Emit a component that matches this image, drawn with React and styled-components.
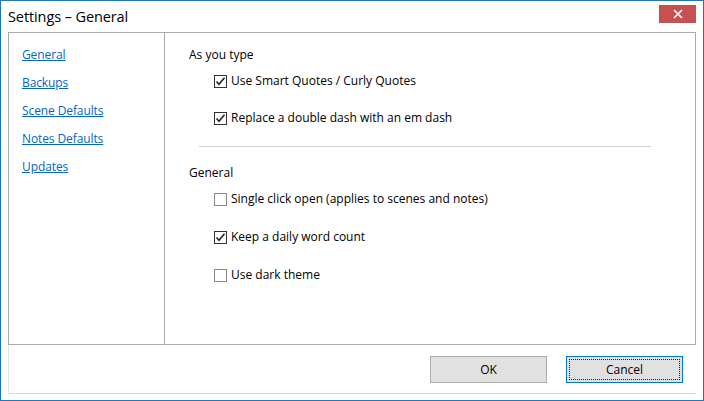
import React from "react";
import styled, { createGlobalStyle } from "styled-components";

const GlobalStyle = createGlobalStyle`
  html, body {
    margin: 0;
    padding: 0;
    background: #ffffff;
  }
  body {
    font-family: "Open Sans", "Noto Sans", sans-serif;
  }
`;

const Window = styled.div`
  box-sizing: border-box;
  width: 704px;
  height: 401px;
  border: 1px solid #1c79c6;
  background: #ffffff;
  display: flex;
  flex-direction: column;
`;

const TitleBar = styled.div`
  height: 31px;
  display: flex;
  align-items: center;
  justify-content: space-between;
  padding: 0 7px 0 7px;
  flex-shrink: 0;
`;

const Title = styled.div`
  font-size: 14.5px;
  color: #000;
  letter-spacing: -0.1px;
  margin-top: -1px;
`;

const CloseButton = styled.div`
  width: 37px;
  height: 18px;
  background: #c75050;
  display: flex;
  align-items: center;
  justify-content: center;
  margin-top: -6px;
`;

const Body = styled.div`
  flex: 1;
  display: flex;
  flex-direction: column;
  padding: 0 7px 6px 7px;
`;

const Panels = styled.div`
  height: 313px;
  display: flex;
  border: 1px solid #a9a9a9;
  box-sizing: border-box;
`;

const Nav = styled.div`
  width: 156px;
  border-right: 1px solid #a9a9a9;
  padding: 13px 0 0 13px;
  box-sizing: border-box;
  display: flex;
  flex-direction: column;
  gap: 10px;
`;

const NavLink = styled.a`
  font-size: 12px;
  line-height: 18px;
  color: #0066cc;
  text-decoration: underline;
  cursor: pointer;
  letter-spacing: -0.1px;
`;

const Content = styled.div`
  flex: 1;
  padding: 13px 0 0 24px;
  display: flex;
  flex-direction: column;
`;

const SectionTitle = styled.div`
  font-size: 12px;
  line-height: 18px;
  color: #000;
`;

const OptionList = styled.div`
  display: flex;
  flex-direction: column;
  gap: ${(p) => p.$gap}px;
  padding: ${(p) => p.$top}px 0 0 25px;
`;

const Option = styled.label`
  display: flex;
  align-items: center;
  gap: 4px;
  font-size: 12px;
  line-height: 18px;
  color: #000;
`;

const Box = styled.span`
  width: 13px;
  height: 13px;
  box-sizing: border-box;
  border: 1px solid ${(p) => (p.$checked ? "#333" : "#8a8a8a")};
  background: #fff;
  display: flex;
  align-items: center;
  justify-content: center;
`;

const Divider = styled.div`
  width: 452px;
  height: 1px;
  background: #d0d0d0;
  margin: 19px 0 17px 10px;
`;

const Footer = styled.div`
  flex: 1;
  display: flex;
  align-items: center;
  justify-content: flex-end;
  gap: 19px;
  padding-right: 13px;
  border-left: 1px solid #e3e3e3;
  border-bottom: 1px solid #d8d8d8;
`;

const Button = styled.button`
  width: 117px;
  height: 27px;
  box-sizing: border-box;
  background: #e1e1e1;
  border: 1px solid ${(p) => (p.$focused ? "#0078d7" : "#adadad")};
  font-family: "Open Sans", "Noto Sans", sans-serif;
  font-size: 12px;
  color: #000;
  padding: 0;
  position: relative;
  &::after {
    content: "";
    display: ${(p) => (p.$focused ? "block" : "none")};
    position: absolute;
    inset: 2px;
    border: 1px dotted #222;
  }
`;

const Check = () => (
  <svg width="11" height="11" viewBox="0 0 11 11">
    <path d="M1.5 5.5 L4 8.2 L9.5 1.8" fill="none" stroke="#222" strokeWidth="1.6" />
  </svg>
);

const CheckOption = ({ checked, children }) => (
  <Option>
    <Box $checked={checked}>{checked && <Check />}</Box>
    {children}
  </Option>
);

export default function App() {
  return (
    <>
      <GlobalStyle />
      <Window>
        <TitleBar>
          <Title>Settings – General</Title>
          <CloseButton>
            <svg width="10" height="10" viewBox="0 0 10 10">
              <path d="M1 1 L9 9 M9 1 L1 9" stroke="#fff" strokeWidth="1.6" />
            </svg>
          </CloseButton>
        </TitleBar>
        <Body>
          <Panels>
            <Nav>
              <NavLink>General</NavLink>
              <NavLink>Backups</NavLink>
              <NavLink>Scene Defaults</NavLink>
              <NavLink>Notes Defaults</NavLink>
              <NavLink>Updates</NavLink>
            </Nav>
            <Content>
              <SectionTitle>As you type</SectionTitle>
              <OptionList $gap={19} $top={8}>
                <CheckOption checked>Use Smart Quotes / Curly Quotes</CheckOption>
                <CheckOption checked>Replace a double dash with an em dash</CheckOption>
              </OptionList>
              <Divider />
              <SectionTitle>General</SectionTitle>
              <OptionList $gap={20} $top={8}>
                <CheckOption>Single click open (applies to scenes and notes)</CheckOption>
                <CheckOption checked>Keep a daily word count</CheckOption>
                <CheckOption>Use dark theme</CheckOption>
              </OptionList>
            </Content>
          </Panels>
          <Footer>
            <Button>OK</Button>
            <Button $focused>Cancel</Button>
          </Footer>
        </Body>
      </Window>
    </>
  );
}
